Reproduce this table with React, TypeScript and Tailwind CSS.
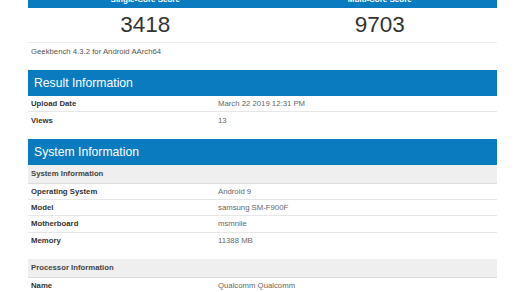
import React from "react";

const BLUE = "bg-[#0b7bbf]";

function Row({ label, value, border = true, h = "h-[16px]" }: { label: string; value: string; border?: boolean; h?: string }) {
  return (
    <div className={`grid grid-cols-[190px_1fr] ${h} items-center ${border ? "border-b border-[#e6e6e6]" : ""}`}>
      <div className="pl-[3px] font-bold text-[7.75px] leading-none text-[#333]">{label}</div>
      <div className="text-[7.75px] leading-none text-[#666]">{value}</div>
    </div>
  );
}

function SubHeader({ title }: { title: string }) {
  return (
    <div className="h-[19px] flex items-center bg-[#efefef] border-b border-[#dcdcdc] pl-[3px] font-bold text-[7.75px] leading-none text-[#444]">
      {title}
    </div>
  );
}

function Header({ title }: { title: string }) {
  return (
    <div className={`${BLUE} h-[26px] flex items-center pl-[6px] text-white text-[12.2px] leading-none`}>
      {title}
    </div>
  );
}

export default function App() {
  return (
    <div
      className="w-[520px] h-[292px] overflow-hidden bg-white"
      style={{ fontFamily: '"Liberation Sans", Arial, sans-serif' }}
    >
      <div className="ml-[28px] w-[469px] flex flex-col">
        {/* Score card */}
        <div className={`${BLUE} h-[8px] overflow-hidden`}>
          <div className="grid grid-cols-2 -mt-[4px] text-white font-bold text-[8px] leading-[8px]">
            <div className="text-center">Single-Core Score</div>
            <div className="text-center">Multi-Core Score</div>
          </div>
        </div>
        <div className="grid grid-cols-2 h-[35px] items-center border-b border-[#ececec] text-[#333] text-[22.5px] leading-none">
          <div className="text-center">3418</div>
          <div className="text-center">9703</div>
        </div>
        <div className="h-[17px] flex items-center pl-[3px] text-[7.75px] leading-none text-[#555]">
          Geekbench 4.3.2 for Android AArch64
        </div>

        {/* Result Information */}
        <div className="mt-[10px]">
          <Header title="Result Information" />
          <Row label="Upload Date" value="March 22 2019 12:31 PM" />
          <Row label="Views" value="13" border={false} h="h-[17px]" />
        </div>

        {/* System Information */}
        <div className="mt-[10px]">
          <Header title="System Information" />
          <SubHeader title="System Information" />
          <Row label="Operating System" value="Android 9" />
          <Row label="Model" value="samsung SM-F900F" />
          <Row label="Motherboard" value="msmnile" h="h-[17px]" />
          <Row label="Memory" value="11388 MB" border={false} />
          <div className="h-[10px]" />
          <SubHeader title="Processor Information" />
          <Row label="Name" value="Qualcomm Qualcomm" border={false} />
        </div>
      </div>
    </div>
  );
}
